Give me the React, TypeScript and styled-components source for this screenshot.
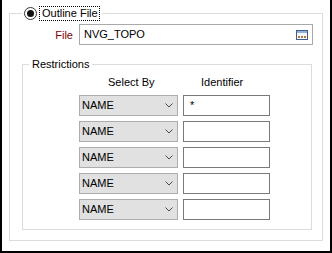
import React from 'react';
import styled, { createGlobalStyle } from 'styled-components';

const GlobalStyle = createGlobalStyle`
  html, body {
    margin: 0;
    padding: 0;
    background: #fff;
  }
  body {
    font-family: "Liberation Sans", Arial, sans-serif;
    font-size: 11px;
    color: #000;
  }
`;

const Frame = styled.div`
  width: 332px;
  height: 253px;
  box-sizing: border-box;
  border: 2px solid #000;
  border-top: none;
  background: #fff;
  padding: 6px 7px 0 7px;
`;

const Group = styled.fieldset<{ $width: number }>`
  margin: 0;
  width: ${p => p.$width}px;
  box-sizing: border-box;
  border: 1px solid #dcdcdc;
  min-width: 0;
`;

const OuterGroup = styled(Group)`
  padding: 3px 9px 10px 12px;
`;

const InnerGroup = styled(Group)`
  padding: 0;
  margin-top: 13px;
`;

const RadioLegend = styled.legend`
  display: flex;
  align-items: center;
  height: 15px;
  padding: 0 2px;
  margin: 0;
`;

const Radio = styled.span`
  width: 13px;
  height: 13px;
  box-sizing: border-box;
  border-radius: 50%;
  border: 1px solid #333;
  background: #fff;
  display: flex;
  align-items: center;
  justify-content: center;
  &::after {
    content: '';
    width: 7px;
    height: 7px;
    border-radius: 50%;
    background: #111;
  }
`;

const FocusLabel = styled.span`
  margin-left: 2px;
  height: 15px;
  box-sizing: border-box;
  border: 1px dotted #000;
  padding: 0 1px 0 2px;
  line-height: 13px;
`;

const TextLegend = styled.legend`
  margin: 0 0 0 6px;
  padding: 0 3px;
  line-height: 13px;
`;

const FileRow = styled.div`
  display: flex;
  align-items: center;
  gap: 6px;
`;

const FileLabel = styled.label`
  width: 51px;
  text-align: right;
  color: #800000;
`;

const Field = styled.div<{ $width: number; $border: string }>`
  width: ${p => p.$width}px;
  height: 21px;
  box-sizing: border-box;
  border: 1px solid ${p => p.$border};
  background: #fff;
  display: flex;
  align-items: center;
  justify-content: space-between;
  padding: 0 4px 0 4px;
  line-height: 13px;
`;

const IdentField = styled(Field)`
  padding-left: 6px;
`;

const Body = styled.div`
  padding: 5px 0 9px 56px;
`;

const Columns = styled.div`
  display: grid;
  grid-template-columns: 99px 87px;
  column-gap: 5px;
  row-gap: 5px;
`;

const HeaderRow = styled(Columns)`
  margin-bottom: 6px;
  line-height: 13px;
`;

const Heading = styled.span<{ $indent: number }>`
  padding-left: ${p => p.$indent}px;
`;

const Select = styled.div`
  height: 21px;
  box-sizing: border-box;
  border: 1px solid #adadad;
  background: #e1e1e1;
  display: flex;
  align-items: center;
  justify-content: space-between;
  padding: 0 4px 0 2px;
  line-height: 13px;
`;

const BrowseIcon = () => (
  <svg width="12" height="10" viewBox="0 0 12 10">
    <rect x="0.5" y="0.5" width="11" height="9" fill="#f4f7fb" stroke="#3d5f8f" />
    <rect x="1" y="1" width="10" height="2" fill="#8fb0d8" />
    <rect x="2" y="6" width="2" height="2" fill="#b07a2c" />
    <rect x="5" y="6" width="2" height="2" fill="#b07a2c" />
    <rect x="8" y="6" width="2" height="2" fill="#b07a2c" />
  </svg>
);

const Chevron = () => (
  <svg width="8" height="5" viewBox="0 0 8 5">
    <path d="M0.5 0.5 L4 4 L7.5 0.5" fill="none" stroke="#4a4a4a" strokeWidth="1" />
  </svg>
);

const rows = [
  { selectBy: 'NAME', identifier: '*' },
  { selectBy: 'NAME', identifier: '' },
  { selectBy: 'NAME', identifier: '' },
  { selectBy: 'NAME', identifier: '' },
  { selectBy: 'NAME', identifier: '' },
];

const App = () => (
  <>
    <GlobalStyle />
    <Frame>
      <OuterGroup $width={314}>
        <RadioLegend>
          <Radio />
          <FocusLabel>Outline File</FocusLabel>
        </RadioLegend>
        <FileRow>
          <FileLabel>File</FileLabel>
          <Field $width={234} $border="#a9a9a9">
            <span>NVG_TOPO</span>
            <BrowseIcon />
          </Field>
        </FileRow>
        <InnerGroup $width={290}>
          <TextLegend>Restrictions</TextLegend>
          <Body>
            <HeaderRow>
              <Heading $indent={29}>Select By</Heading>
              <Heading $indent={18}>Identifier</Heading>
            </HeaderRow>
            <Columns>
              {rows.map((row, i) => (
                <React.Fragment key={i}>
                  <Select>
                    <span>{row.selectBy}</span>
                    <Chevron />
                  </Select>
                  <IdentField $width={87} $border="#7a7a7a">
                    <span>{row.identifier}</span>
                  </IdentField>
                </React.Fragment>
              ))}
            </Columns>
          </Body>
        </InnerGroup>
      </OuterGroup>
    </Frame>
  </>
);

export default App;
